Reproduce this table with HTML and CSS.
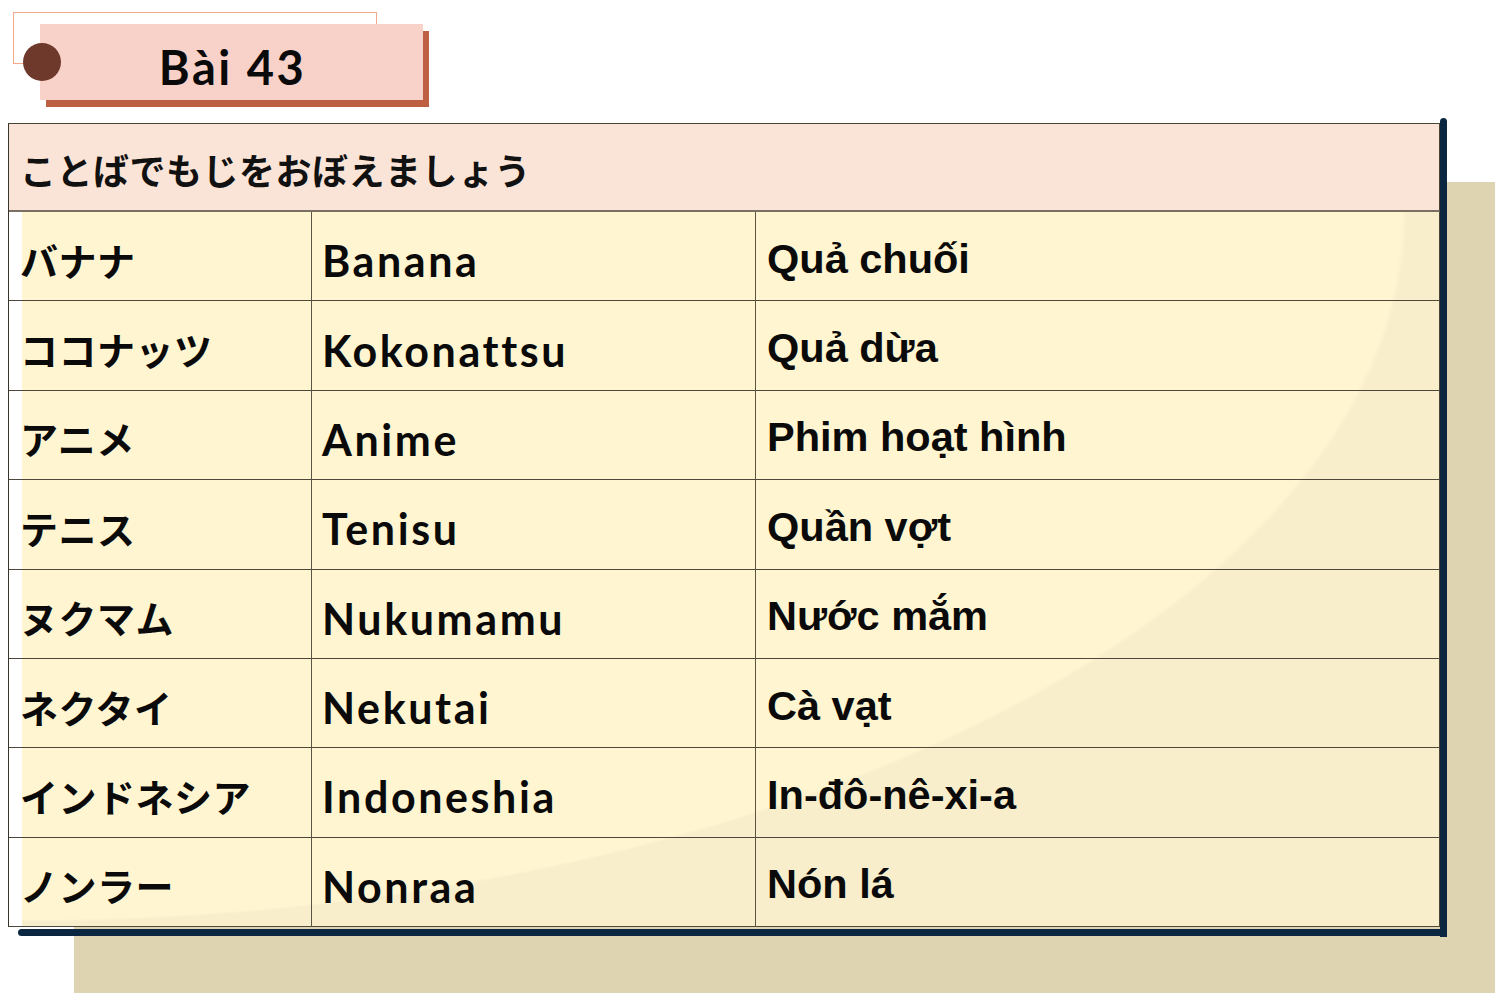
FILE: index.html
```html
<!DOCTYPE html>
<html lang="vi">
<head>
<meta charset="utf-8">
<title>Bài 43</title>
<link rel="stylesheet" href="styles.css">
</head>
<body>
<div class="page">
  <header class="title-area">
    <div class="title-outline"></div>
    <div class="title-box"><span class="title-text">Bài 43</span></div>
    <div class="title-dot"></div>
  </header>

  <section class="board">
    <div class="board-backdrop"></div>
    <div class="board-bar-right"></div>
    <div class="board-bar-bottom"></div>
    <div class="board-head">ことばでもじをおぼえましょう</div>
    <div class="board-body">
      <div class="cell jp">バナナ</div><div class="cell en">Banana</div><div class="cell vi">Quả chuối</div>
      <div class="cell jp">ココナッツ</div><div class="cell en">Kokonattsu</div><div class="cell vi">Quả dừa</div>
      <div class="cell jp">アニメ</div><div class="cell en">Anime</div><div class="cell vi">Phim hoạt hình</div>
      <div class="cell jp">テニス</div><div class="cell en">Tenisu</div><div class="cell vi">Quần vợt</div>
      <div class="cell jp">ヌクマム</div><div class="cell en">Nukumamu</div><div class="cell vi">Nước mắm</div>
      <div class="cell jp">ネクタイ</div><div class="cell en">Nekutai</div><div class="cell vi">Cà vạt</div>
      <div class="cell jp">インドネシア</div><div class="cell en">Indoneshia</div><div class="cell vi">In-đô-nê-xi-a</div>
      <div class="cell jp">ノンラー</div><div class="cell en">Nonraa</div><div class="cell vi">Nón lá</div>
    </div>
  </section>
</div>
</body>
</html>
```

FILE: styles.css
```css
html, body {
  margin: 0;
  padding: 0;
  background: #ffffff;
}

.page {
  width: 1510px;
  height: 1000px;
  position: relative;
  z-index: 0;
  overflow: hidden;
}

/* ---------- title ---------- */
.title-area {
  position: relative;
  padding: 24px 0 0 40px;
  height: 76px;
}

.title-outline {
  position: absolute;
  left: 13px;
  top: 12px;
  width: 362px;
  height: 50px;
  border: 1.5px solid #f4a98f;
  background: #ffffff;
}

.title-box {
  position: relative;
  width: 383px;
  height: 76px;
  background: #f8d2c9;
  box-shadow: 6px 7px 0 #bc5f43;
  display: flex;
  align-items: center;
  justify-content: center;
}

.title-text {
  font-family: Lato, "Noto Sans", sans-serif;
  font-weight: 700;
  font-size: 47px;
  letter-spacing: 2.5px;
  color: #0a0a0a;
  padding-left: 2px;
  padding-top: 10px;
}

.title-dot {
  position: absolute;
  left: 23px;
  top: 43px;
  width: 38px;
  height: 38px;
  border-radius: 50%;
  background: #6e392b;
}

/* ---------- board ---------- */
.board {
  position: relative;
  margin: 23px 0 0 8px;
  width: 1432px;
  box-sizing: border-box;
  border-left: 1px solid #3a352c;
  border-top: 1px solid #4b4538;
}

.board-backdrop {
  position: absolute;
  left: 65px;
  top: 58px;
  width: 1421px;
  height: 811px;
  background: #ded4b2;
  z-index: -1;
}

.board-bar-right {
  position: absolute;
  left: 1431px;
  top: -6px;
  width: 7px;
  height: 819px;
  background: #0b2640;
  border-radius: 4px 4px 0 0;
  z-index: 2;
}

.board-bar-bottom {
  position: absolute;
  left: 9px;
  top: 805px;
  width: 1429px;
  height: 7px;
  background: #0b2640;
  border-radius: 4px 0 0 4px;
  z-index: 2;
}

.board-head {
  height: 88px;
  box-sizing: border-box;
  background: #fae4d7;
  border-bottom: 2px solid #7a7062;
  border-right: 1px solid #4b4538;
  display: flex;
  align-items: center;
  padding: 4px 0 0 11px;
  font-family: "Noto Sans CJK JP", sans-serif;
  font-weight: 700;
  font-size: 36px;
  letter-spacing: 0.5px;
  color: #111111;
}

.board-body {
  display: grid;
  grid-template-columns: 303px 444px 684px;
  grid-template-rows: repeat(8, 89.375px);
  background-color: #ffffff;
  background-image: radial-gradient(ellipse 1385px 710px at 0 0, #fff5d1 99.6%, #f8eecb 100%);
  background-position: 13px 0;
  background-size: calc(100% - 13px) 100%;
  background-repeat: no-repeat;
}

.cell {
  box-sizing: border-box;
  border-bottom: 1px solid #4e483c;
  border-right: 1px solid #5a5447;
  display: flex;
  align-items: center;
  color: #0a0a0a;
  white-space: nowrap;
}

.jp {
  padding: 6px 0 0 11px;
  font-family: "Noto Sans CJK JP", sans-serif;
  font-weight: 700;
  font-size: 38px;
  letter-spacing: 0.5px;
}

.en {
  padding: 9px 0 0 10px;
  font-family: Lato, "Noto Sans", sans-serif;
  font-weight: 700;
  font-size: 43px;
  letter-spacing: 2.6px;
}

.vi {
  padding: 5px 0 0 11px;
  font-family: "Liberation Sans", Arial, sans-serif;
  font-weight: 700;
  font-size: 41.5px;
  border-right: 1px solid #4b4538;
}
```
